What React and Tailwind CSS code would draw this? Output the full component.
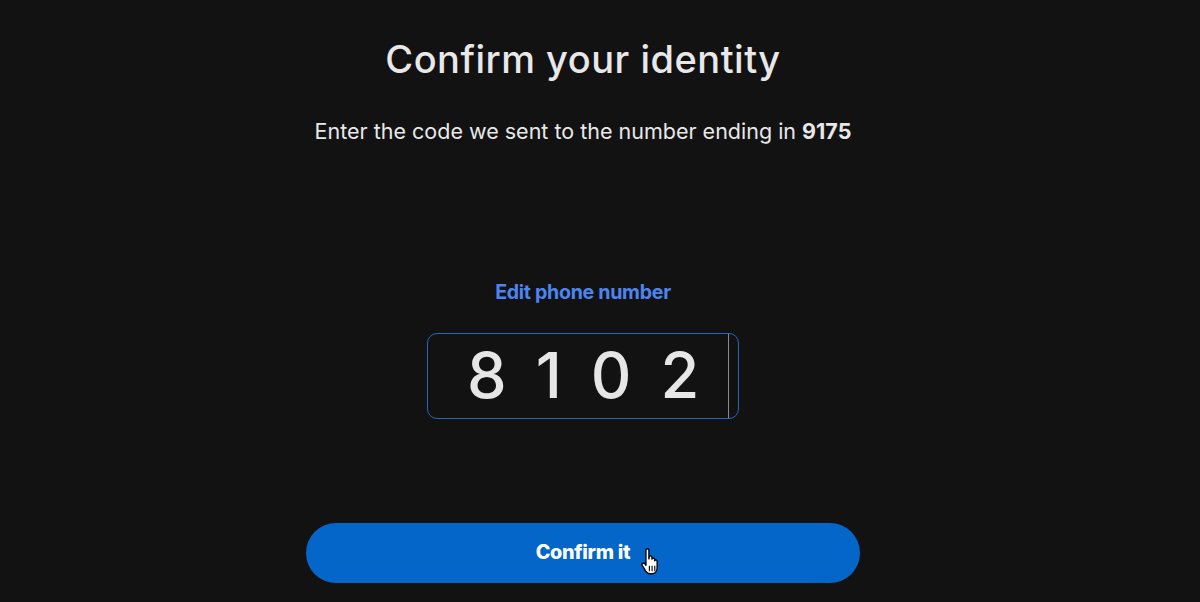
const HandCursor = () => (
  <svg width="18" height="27" viewBox="0.5 0.5 14 22" className="absolute left-[335px] top-[25px]">
    <path
      d="M4.2 2.2c0-1.5 2.4-1.5 2.4 0v7.2l.3-1.6c.3-1.3 2.2-1.1 2.2.3v1.5c.2-1.3 2.1-1.2 2.2.2v1.1c.3-1.1 2-.9 2 .4v5.2c0 2.8-1.6 5-4.4 5H7.6c-1.7 0-2.7-.8-3.6-2.2L1.2 14.6c-.7-1.3 1-2.5 2-1.3l1 1.3z"
      fill="#fff"
      stroke="#000"
      strokeWidth="1.1"
      strokeLinejoin="round"
    />
    <path d="M7 15v4.5M9.2 15v4.5M11.4 15v4.5" stroke="#000" strokeWidth="0.9" />
  </svg>
);

const App = () => {
  const digits = ['8', '1', '0', '2'];

  return (
    <div className="h-[602px] overflow-hidden bg-[#121212] text-[#e8e8e8] font-['Inter',sans-serif]">
      <div className="mx-auto flex w-[554px] translate-x-[-17px] flex-col items-center">
        <h1 className="mt-[35px] text-[38px] leading-[48px] font-medium tracking-[0.5px]">
          Confirm your identity
        </h1>
        <p className="mt-[33px] text-[21.5px] leading-[30px]">
          Enter the code we sent to the number ending in <strong className="font-bold">9175</strong>
        </p>
        <a className="mt-[132px] text-[19.6px] leading-[28px] font-bold tracking-[-0.3px] text-[#4d85f0]">
          Edit phone number
        </a>
        <div className="relative mt-[27px] flex h-[86px] w-[312px] items-center rounded-[10px] border border-[#2168bd] pb-[2px] pl-[39px] text-[63px] font-medium text-[#e6e6e6]">
          <div className="flex gap-[29px] leading-none">
            {digits.map((d, i) => (
              <span key={i}>{d}</span>
            ))}
          </div>
          <div className="absolute right-[9px] top-0 h-full w-px bg-[#8a8a8a]" />
        </div>
        <button className="relative mt-[104px] h-[60px] w-full rounded-full bg-[#0366c8] text-[19.8px] font-extrabold tracking-[-0.3px] text-white">
          Confirm it
          <HandCursor />
        </button>
      </div>
    </div>
  );
};

export default App;
